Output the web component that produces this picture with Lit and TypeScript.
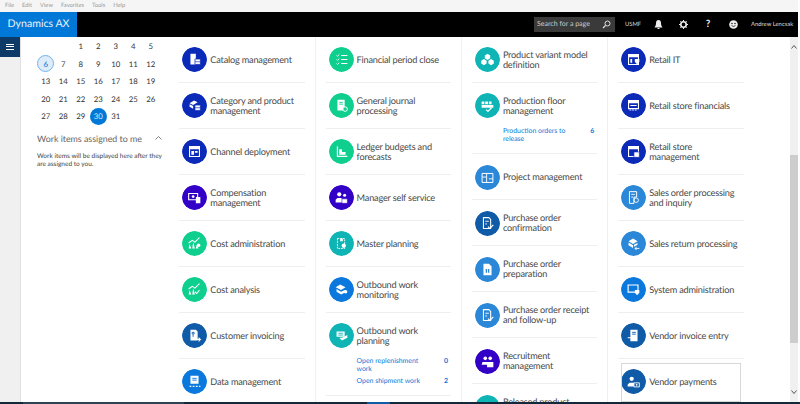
import { LitElement, html, css, svg } from "lit";
import { customElement } from "lit/decorators.js";

const NAVY = "#0b2ab8", VIOLET = "#3300c8", GREEN = "#0fcf8f", DEEP = "#0f5ba8", AZURE = "#0a78dc", TEAL = "#0fb5b5", SKY = "#2b88d8";

const glyphs: Record<string, any> = {
  catalog: svg`<path d="M8 6h6v12H8z" fill="#fff"/><path d="M13 12h6v6h-6z" fill="#fff" stroke="${NAVY}" stroke-width=".8"/><path d="M13 15h6" stroke="${NAVY}" stroke-width=".7"/>`,
  category: svg`<path d="M7 10l5-3 4 2-5 3z" fill="#fff"/><path d="M7 11l4 2v3l-4-2z" fill="#fff"/><path d="M13 12h6v6h-6z" fill="#fff" stroke="${NAVY}" stroke-width=".8"/><path d="M13 15h6" stroke="${NAVY}" stroke-width=".7"/>`,
  channel: svg`<path d="M7 7h11v11H7z" fill="none" stroke="#fff" stroke-width="1.2"/><path d="M7 7h11v3H7zM9 12h3v4H9zM13 12h3v2h-3z" fill="#fff"/>`,
  comp: svg`<path d="M6 8h10v7H6z" fill="none" stroke="#fff" stroke-width="1.2"/><circle cx="11" cy="11.5" r="1.5" fill="#fff"/><path d="M14 12h5v7h-5z" fill="#fff"/>`,
  cost: svg`<path d="M6 18l1-5 2 5zM10 18l1-7 2 7zM14 18l1-4 2 4z" fill="#fff"/><path d="M6 12l4-3 3 2 5-5" fill="none" stroke="#fff" stroke-width="1.2"/><circle cx="17" cy="14.500" r="2" fill="#fff"/>`,
  analysis: svg`<path d="M6 18l1-5 2 5zM10 18l1-7 2 7z" fill="#fff"/><path d="M6 12l4-3 3 2 5-5" fill="none" stroke="#fff" stroke-width="1.2"/><path d="M13 15l2 2 3-4" fill="none" stroke="#fff" stroke-width="1.2"/>`,
  invoice: svg`<path d="M8 6h6l2 2v10H8z" fill="#fff"/><path d="M10 9h2v2h-2zM10 13h2" fill="none" stroke="${DEEP}"/><path d="M13 17h6M17 15l2 2-2 2" fill="none" stroke="#fff" stroke-width="1.2"/>`,
  data: svg`<path d="M8 6h9v9H8z" fill="#fff"/><path d="M10 9h5M10 11h5" stroke="${AZURE}"/><path d="M7 18h12" stroke="#fff" stroke-width="1.300" stroke-dasharray="2 1.500"/>`,
  close: svg`<path d="M7 8l1 1 2-2M7 12.500l1 1 2-2M7 17l1 1 2-2" fill="none" stroke="#fff"/><path d="M12 8h7M12 12.500h7M12 17h7" stroke="#fff" stroke-width="1.200"/>`,
  journal: svg`<path d="M8 6h8v12H8z" fill="#fff"/><path d="M10 9h4M10 11h4" stroke="${GREEN}"/><circle cx="16.500" cy="16.500" r="2.500" fill="${GREEN}" stroke="#fff" stroke-width="1.100"/>`,
  ledger: svg`<path d="M8 7v11h11" fill="none" stroke="#fff" stroke-width="1.400"/><path d="M10 10h3v6h-3zM13 13h4v3h-4z" fill="#fff"/>`,
  people: svg`<circle cx="10" cy="9" r="2.300" fill="#fff"/><path d="M6 18v-3l2-2h4l2 2v3z" fill="#fff"/><circle cx="16" cy="10" r="1.700" fill="#fff"/><path d="M13 14h6v5h-6z" fill="#fff" stroke="${VIOLET}" stroke-width=".6"/>`,
  master: svg`<path d="M8 7h8v11H8z" fill="none" stroke="#fff" stroke-dasharray="2 1"/><circle cx="15" cy="15" r="2.400" fill="#fff"/><path d="M11 7h3v3h-3z" fill="#fff"/>`,
  monitor: svg`<path d="M6 10l5-3 6 3-5 3z" fill="#fff"/><path d="M7 12l5 3 4-2v3l-4 2-5-3z" fill="#fff"/><circle cx="17" cy="15" r="2" fill="#fff"/>`,
  outplan: svg`<path d="M7 8h9v6H7z" fill="#fff"/><path d="M9 10h5M9 12h5" stroke="${TEAL}"/><path d="M10 15l3 3 6-3v-3l-6 3z" fill="#fff"/>`,
  variant: svg`<path d="M12.500 6l3 2v3l-3 2-3-2V8z" fill="#fff"/><path d="M8.500 12l3 2v3l-3 2-3-2v-3zM16.500 12l3 2v3l-3 2-3-2v-3z" fill="#fff"/>`,
  floor: svg`<path d="M6 8h3v3H6zM10 8h3v3h-3zM14 8h3v3h-3zM6 12h13v3H6z" fill="#fff"/><path d="M11 17l2 2 4-4" fill="none" stroke="#fff" stroke-width="1.300"/>`,
  project: svg`<path d="M6.500 8h12v10h-12z" fill="none" stroke="#fff" stroke-width="1.100"/><path d="M6.500 12h5v6M11.500 8v4M14 14h4.500" fill="none" stroke="#fff"/>`,
  poconf: svg`<path d="M8 6h6l2 2v10H8z" fill="none" stroke="#fff" stroke-width="1.200"/><path d="M10 10h4M10 13h2" stroke="#fff"/><path d="M13 16l2 2 4-4" fill="none" stroke="#fff" stroke-width="1.300"/>`,
  poprep: svg`<path d="M8 6h6l3 3v10H8z" fill="#fff"/><path d="M10.500 12h1.500v4h-1.500zM13 12h1.500v4H13z" fill="${SKY}"/>`,
  recruit: svg`<circle cx="10" cy="9" r="2" fill="#fff"/><circle cx="15.500" cy="9" r="2" fill="#fff"/><path d="M6 16l1-3h5l1 3z" fill="#fff"/><path d="M12 13h7v6h-7z" fill="#fff"/>`,
  retailit: svg`<path d="M7 7h11v11H7z" fill="none" stroke="#fff" stroke-width="1.200"/><path d="M7 7h11v3H7zM9 12h2v4H9z" fill="#fff"/><path d="M14 12h5v3l-2.500 3-2.500-3z" fill="#fff"/>`,
  storefin: svg`<path d="M7 7h11v9H7z" fill="none" stroke="#fff" stroke-width="1.200"/><path d="M7 7h11v3H7zM9 12h7v1H9z" fill="#fff"/><path d="M8 17.500h9" stroke="#fff" stroke-dasharray="2 1"/>`,
  storemgmt: svg`<path d="M7 7h11v11H7z" fill="none" stroke="#fff" stroke-width="1.200"/><path d="M7 7h11v3H7z" fill="#fff"/><path d="M13 13h6v6h-6z" fill="#fff" stroke="${NAVY}" stroke-width=".7"/>`,
  salesorder: svg`<path d="M8 6h8v6h-3v7H8z" fill="none" stroke="#fff" stroke-width="1.100"/><path d="M10 9h4M10 12h2" stroke="#fff"/><circle cx="15.500" cy="15.500" r="2.500" fill="none" stroke="#fff"/>`,
  salesret: svg`<path d="M7 10l5-3 5 3-5 3z" fill="#fff"/><path d="M7 11.500l5 3v3l-5-3zM13 14l4-2v2l-4 2z" fill="#fff"/><path d="M14 18h5M16 16.500L14 18l2 1.500" fill="none" stroke="#fff"/>`,
  system: svg`<path d="M6.500 7.500h11v8h-11z" fill="none" stroke="#fff" stroke-width="1.300"/><path d="M14 13h5v3l-2.500 3-2.500-3z" fill="#fff"/>`,
  vinv: svg`<path d="M9 6h8v13H9z" fill="#fff"/><path d="M11 9h4M11 11h4" stroke="${DEEP}"/><path d="M6 15h6M10 13l2 2-2 2" fill="none" stroke="#fff" stroke-width="1.200" />`,
  vpay: svg`<circle cx="10.500" cy="9.500" r="2.400" fill="#fff"/><path d="M6 18v-2l2-2h5l1 2v2z" fill="#fff"/><path d="M13 14h6v4.500h-6z" fill="${DEEP}" stroke="#fff"/><circle cx="16" cy="16.200" r="1" fill="#fff"/>`,
};

type Sub = { text: string; n: number };
type Item = { t: string; c: string; g: string; subs?: Sub[]; focus?: boolean };

const cols: Item[][] = [
  [
    { t: "Catalog management", c: NAVY, g: "catalog" },
    { t: "Category and product management", c: NAVY, g: "category" },
    { t: "Channel deployment", c: NAVY, g: "channel" },
    { t: "Compensation management", c: VIOLET, g: "comp" },
    { t: "Cost administration", c: GREEN, g: "cost" },
    { t: "Cost analysis", c: GREEN, g: "analysis" },
    { t: "Customer invoicing", c: DEEP, g: "invoice" },
    { t: "Data management", c: AZURE, g: "data" },
  ],
  [
    { t: "Financial period close", c: GREEN, g: "close" },
    { t: "General journal processing", c: GREEN, g: "journal" },
    { t: "Ledger budgets and forecasts", c: GREEN, g: "ledger" },
    { t: "Manager self service", c: VIOLET, g: "people" },
    { t: "Master planning", c: TEAL, g: "master" },
    { t: "Outbound work monitoring", c: AZURE, g: "monitor" },
    {
      t: "Outbound work planning", c: TEAL, g: "outplan",
      subs: [{ text: "Open replenishment work", n: 0 }, { text: "Open shipment work", n: 2 }],
    },
  ],
  [
    { t: "Product variant model definition", c: TEAL, g: "variant" },
    { t: "Production floor management", c: TEAL, g: "floor", subs: [{ text: "Production orders to release", n: 6 }] },
    { t: "Project management", c: SKY, g: "project" },
    { t: "Purchase order confirmation", c: DEEP, g: "poconf" },
    { t: "Purchase order preparation", c: SKY, g: "poprep" },
    { t: "Purchase order receipt and follow-up", c: SKY, g: "poconf" },
    { t: "Recruitment management", c: VIOLET, g: "recruit" },
    { t: "Released product maintenance", c: TEAL, g: "variant" },
  ],
  [
    { t: "Retail IT", c: NAVY, g: "retailit" },
    { t: "Retail store financials", c: NAVY, g: "storefin" },
    { t: "Retail store management", c: NAVY, g: "storemgmt" },
    { t: "Sales order processing and inquiry", c: SKY, g: "salesorder" },
    { t: "Sales return processing", c: SKY, g: "salesret" },
    { t: "System administration", c: AZURE, g: "system" },
    { t: "Vendor invoice entry", c: DEEP, g: "vinv" },
    { t: "Vendor payments", c: DEEP, g: "vpay", focus: true },
  ],
];

const weeks: (number | null)[] = [
  null, null, 1, 2, 3, 4, 5,
  6, 7, 8, 9, 10, 11, 12,
  13, 14, 15, 16, 17, 18, 19,
  20, 21, 22, 23, 24, 25, 26,
  27, 28, 29, 30, 31, null, null,
];

@customElement("app-root")
export class AppRoot extends LitElement {
  static styles = css`
    :host { display: block; width: 800px; height: 404px; overflow: hidden; background: #fff; position: relative;
      font-family: Lato, Roboto, sans-serif; color: #333; text-rendering: geometricPrecision; }
    .page { width: 798px; height: 402px; display: flex; flex-direction: column; overflow: hidden; }
    .menubar { height: 11.500px; background: #f5f5f5; display: flex; gap: 8px; padding-left: 5px; align-items: center;
      font-size: 5.800px; color: #999; flex: none; box-sizing: border-box; }
    .top { height: 25px; background: #000; display: flex; align-items: center; flex: none; color: #ddd; }
    .brand { width: 77px; height: 25px; background: #0078d7; color: #e8f3fc; font-size: 10.600px; display: flex;
      align-items: center; padding-left: 7.500px; box-sizing: border-box; flex: none; white-space: nowrap; }
    .spacer { flex: 1; }
    .search { width: 81px; height: 15px; background: #3a3a3a; color: #ccc; font-size: 7px; display: flex;
      align-items: center; justify-content: space-between; padding: 0 4px 0 3px; box-sizing: border-box; }
    .usmf { font-size: 5.800px; margin-left: 10px; width: 20.500px; }
    .tico { width: 25px; display: flex; justify-content: center; }
    .qm { font-size: 10px; font-weight: 700; color: #eee; }
    .user { font-size: 5.900px; width: 47px; margin-left: 5.500px; white-space: nowrap; }
    .body { flex: 1; display: flex; min-height: 0; }
    .rail { width: 20px; background: #f0f0f0; border-right: 1px solid #e0e0e0; flex: none; }
    .burger { height: 20px; background: #0d3a66; display: flex; flex-direction: column; justify-content: center;
      align-items: center; gap: 1.500px; }
    .burger i { display: block; width: 8px; height: 1px; background: #fff; }
    .side { width: 148.300px; flex: none; padding: 1px 0 0 16px; box-sizing: border-box; }
    .cal { display: grid; grid-template-columns: repeat(7, 17.500px); grid-auto-rows: 17.500px; }
    .day { display: flex; align-items: center; justify-content: center; font-size: 7.800px; color: #333; }
    .day span { width: 17px; height: 17px; border-radius: 50%; display: flex; align-items: center; justify-content: center; box-sizing: border-box; }
    .today { background: #deecf9; border: 1px solid #71b5ea; color: #0078d7; }
    .sel { background: #0078d7; color: #cfe6f9; }
    .wh { display: flex; justify-content: space-between; align-items: center; margin-top: 7.500px; font-size: 8.850px; color: #666; width: 124.500px; white-space: nowrap; }
    .wt { font-size: 6.500px; line-height: 8.500px; color: #444; margin-top: 9px; width: 128px; }
    .main { flex: 1; display: flex; min-width: 0; overflow: hidden; }
    .col { width: 146.300px; flex: none; box-sizing: border-box; padding: 0 10px; border-right: 1px solid #f0f0f0; }
    .col:last-child { border-right: 0; }
    .row { border-bottom: 1px solid #eee; padding: 10.500px 0 0 3px; min-height: 46px; box-sizing: border-box; position: relative; }
    .focus { border-bottom: 0; }
    .focus::after { content: ""; position: absolute; left: 3px; right: 3px; top: 4px; height: 39px; border: 1px solid #d8d8d8; box-sizing: border-box; }
    .head { display: flex; align-items: center; gap: 3px; height: 25px; }
    .circle { width: 25px; height: 25px; border-radius: 50%; flex: none; display: block; }
    .title { font-size: 9.200px; letter-spacing: -.2px; line-height: 10px; color: #4a4a4a; max-width: 92px; }
    .subs { padding: 9px 0 10px 28px; display: flex; flex-direction: column; gap: 3.500px; }
    .sub { display: flex; justify-content: space-between; font-size: 6.900px; line-height: 8px; color: #0a78d7; }
    .sub span:first-child { width: 68px; }
    .sub b { margin-right: 3px; font-weight: 700; }
    .sb { width: 8px; flex: none; background: #f0f0f0; display: flex; flex-direction: column; align-items: center; }
    .up { height: 20px; display: flex; align-items: center; justify-content: center; }
    .thumb { margin-top: 98px; height: 188px; width: 8px; background: #cdcdcd; flex: none; }
    .dn { margin-top: auto; height: 21px; display: flex; align-items: center; justify-content: center; }
    .task { position: absolute; left: 0; right: 0; bottom: 0; height: 2px; background: #13283a; display: flex; }
    .task .a { margin-left: 23px; width: 161px; background: #2f4252; }
    .task .b { margin-left: 183px; width: 23px; background: #0f5ba8; }
  `;

  row(i: Item) {
    return html`<div class="row ${i.focus ? "focus" : ""}">
      <div class="head">
        <svg class="circle" viewBox="0 0 25 25"><circle cx="12.500" cy="12.500" r="12.500" fill=${i.c}></circle><g transform="translate(1.250 1.250) scale(.9)">${glyphs[i.g]}</g></svg>
        <div class="title">${i.t}</div>
      </div>
      ${i.subs
        ? html`<div class="subs">${i.subs.map((s) => html`<div class="sub"><span>${s.text}</span><b>${s.n}</b></div>`)}</div>`
        : ""}
    </div>`;
  }

  render() {
    return html`<div class="page">
      <div class="menubar">${["File", "Edit", "View", "Favorites", "Tools", "Help"].map((m) => html`<span>${m}</span>`)}</div>
      <div class="top">
        <div class="brand">Dynamics AX</div>
        <div class="spacer"></div>
        <div class="search"><span>Search for a page</span>
          <svg width="9" height="9" viewBox="0 0 9 9"><circle cx="5.500" cy="3.500" r="2.500" fill="none" stroke="#ddd"></circle><path d="M3.500 5.500L1 8" stroke="#ddd" stroke-width="1.200"></path></svg>
        </div>
        <div class="usmf">USMF</div>
        <div class="tico"><svg width="9" height="9" viewBox="0 0 9 9"><path d="M4.500 0c2 0 2.500 1.500 2.500 3.500S8 6.500 8.500 7.500h-8C1 6.500 2 5.500 2 3.500S2.500 0 4.500 0zM3.500 8h2v1h-2z" fill="#eee"></path></svg></div>
        <div class="tico"><svg width="9" height="9" viewBox="0 0 9 9"><circle cx="4.500" cy="4.500" r="2.700" fill="none" stroke="#eee" stroke-width="1.600"></circle><path d="M4.500 0v9M0 4.500h9M1.300 1.300l6.400 6.400M7.700 1.300L1.300 7.700" stroke="#eee" stroke-dasharray="1.400 6.200"></path></svg></div>
        <div class="tico qm">?</div>
        <div class="tico"><svg width="9" height="9" viewBox="0 0 9 9"><circle cx="4.500" cy="4.500" r="4.300" fill="#eee"></circle><circle cx="3" cy="3.500" r=".7"></circle><circle cx="6" cy="3.500" r=".7"></circle><path d="M2.500 5.500q2 2 4 0" fill="none" stroke="#000" stroke-width=".7"></path></svg></div>
        <div class="user">Andrew Lencsak</div>
      </div>
      <div class="body">
        <div class="rail"><div class="burger"><i></i><i></i><i></i></div></div>
        <div class="side">
          <div class="cal">
            ${weeks.map((d) => html`<div class="day"><span class=${d === 6 ? "today" : d === 30 ? "sel" : ""}>${d ?? ""}</span></div>`)}
          </div>
          <div class="wh"><span>Work items assigned to me</span>
            <svg width="7" height="4" viewBox="0 0 7 4"><path d="M.5 3.500l3-3 3 3" fill="none" stroke="#666" stroke-width=".8"></path></svg>
          </div>
          <div class="wt">Work items will be displayed here after they are assigned to you.</div>
        </div>
        <div class="main">
          ${cols.map((c) => html`<div class="col">${c.map((i) => this.row(i))}</div>`)}
        </div>
        <div class="sb">
          <div class="up"><svg width="6" height="4" viewBox="0 0 6 4"><path d="M.5 3.500l2.500-3 2.500 3" fill="none" stroke="#555"></path></svg></div>
          <div class="thumb"></div>
          <div class="dn"><svg width="6" height="4" viewBox="0 0 6 4"><path d="M.5 .5l2.500 3 2.500-3" fill="none" stroke="#555"></path></svg></div>
        </div>
      </div>
    </div><div class="task"><div class="a"></div><div class="b"></div></div>`;
  }
}
